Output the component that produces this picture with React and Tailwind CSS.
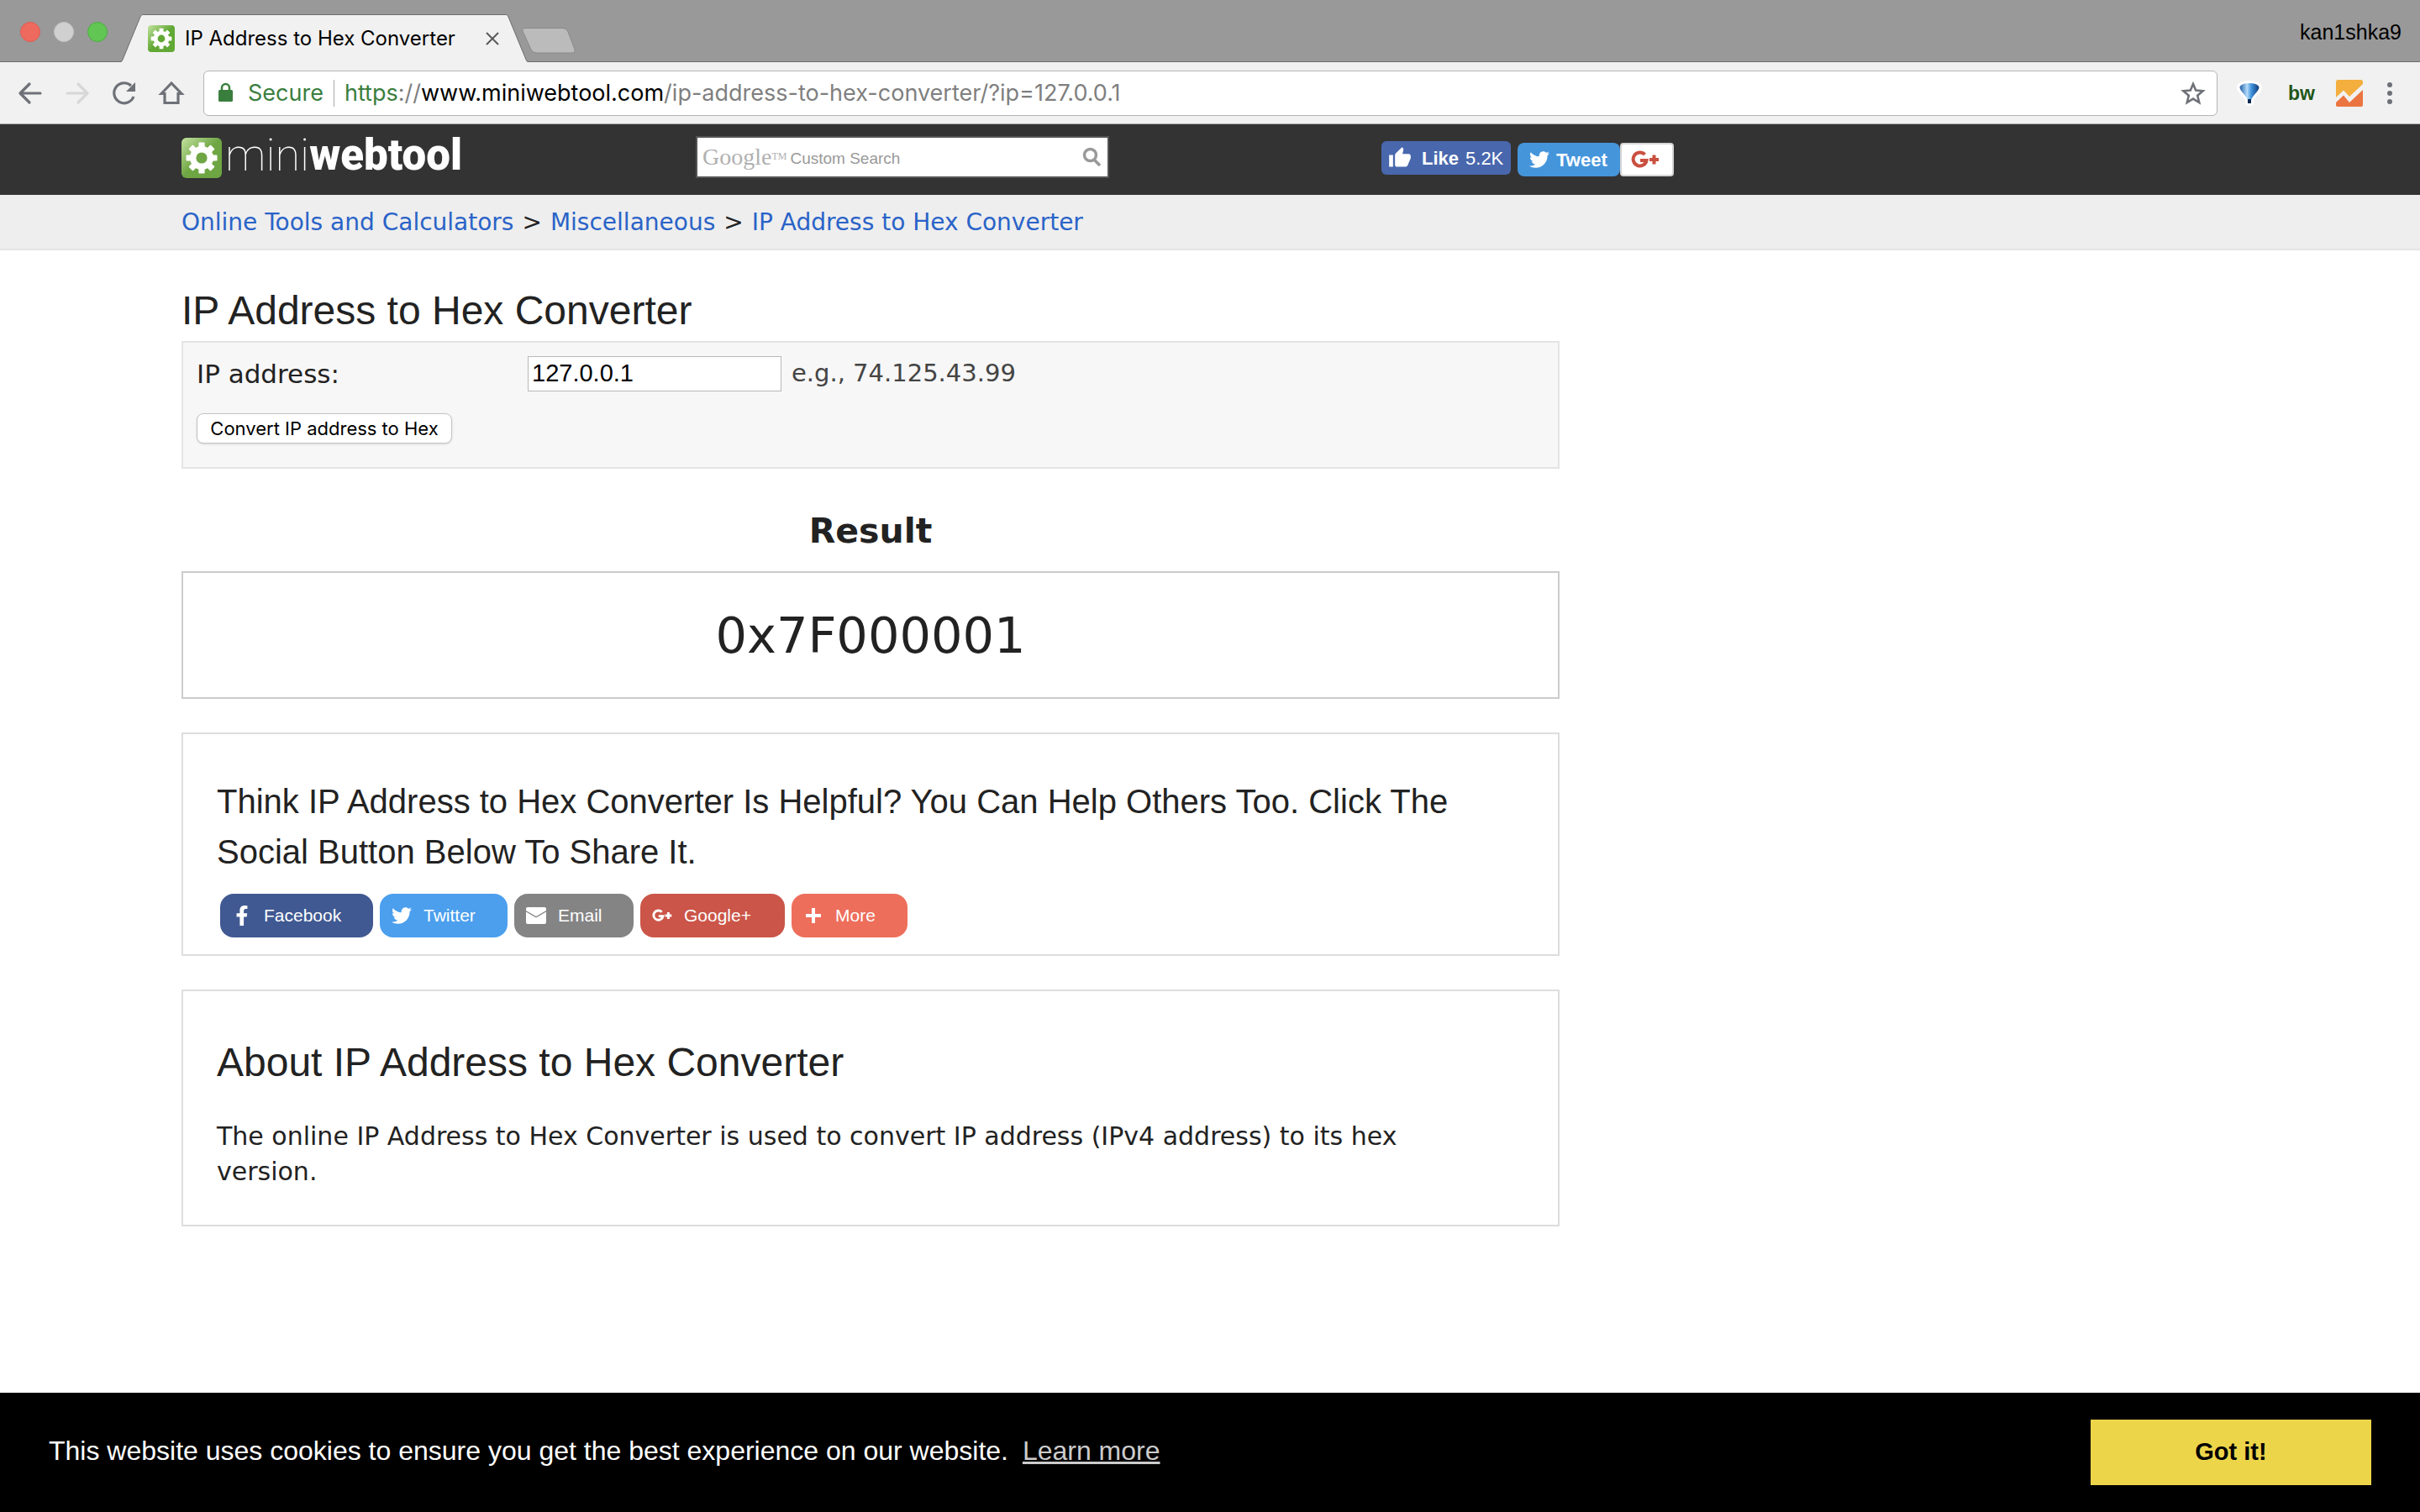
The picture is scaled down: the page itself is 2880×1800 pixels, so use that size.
import React, { useId } from "react";
import { FaFacebookF, FaTwitter } from "react-icons/fa";
import { MdThumbUp } from "react-icons/md";

function Gear({ className, hub }) {
  const id = useId();
  return (
    <svg viewBox="0 0 48 48" className={className} aria-hidden="true">
      <defs>
        <linearGradient id={id} x1="0" y1="0" x2="0.5" y2="0.5">
          <stop offset="0" stopColor="#c3e39f" />
          <stop offset="1" stopColor={hub} />
        </linearGradient>
      </defs>
      <rect width="48" height="48" rx="6" fill={`url(#${id})`} />
      <g transform="translate(24 24)" fill="#fff">
        <circle r="14" />
        {[0, 45, 90, 135, 180, 225, 270, 315].map((a) => (
          <rect key={a} x="-3.6" y="-18.5" width="7.2" height="9" rx="1" transform={`rotate(${a})`} />
        ))}
        <circle r="6.6" fill={hub} />
      </g>
    </svg>
  );
}

function TabShape({ children }) {
  return (
    <div className="flex h-full">
      <svg viewBox="0 0 26 57" className="h-[57px] w-[26px] shrink-0 self-end" aria-hidden="true">
        <path d="M0 57C1 56 1 56 2 54L23 3C24 1 25 .5 26 .5V57Z" fill="#f1f1f1" />
        <path d="M0 56C1 56 1 56 2 54L23 3C24 1 25 .5 26 .5" fill="none" stroke="#6c6c6c" />
      </svg>
      <div className="flex h-[57px] w-[432px] items-center self-end border-t border-[#6c6c6c] bg-[#f1f1f1]">{children}</div>
      <svg viewBox="0 0 26 57" className="h-[57px] w-[26px] shrink-0 self-end" aria-hidden="true">
        <path d="M26 57C25 56 25 56 24 54L3 3C2 1 1 .5 0 .5V57Z" fill="#f1f1f1" />
        <path d="M26 56C25 56 25 56 24 54L3 3C2 1 1 .5 0 .5" fill="none" stroke="#6c6c6c" />
      </svg>
    </div>
  );
}

function TabStrip() {
  return (
    <header className="flex h-[74px] justify-between bg-[#999999] shadow-[inset_0_-1px_0_#6c6c6c]">
      <div className="flex h-full">
        <div className="mr-4 flex h-[76px] items-center gap-4 pl-6">
          <span className="h-6 w-6 rounded-full border border-[#df5b50] bg-[#ee6a5f]" />
          <span className="h-6 w-6 rounded-full border border-[#c4c4c4] bg-[#d0d0d0]" />
          <span className="h-6 w-6 rounded-full border border-[#4cae3f] bg-[#61c654]" />
        </div>
        <TabShape>
          <Gear className="ml-[6px] h-8 w-8" hub="#62a835" />
          <span className="ml-3 flex-1 font-[Inter] text-2xl whitespace-nowrap text-black">IP Address to Hex Converter</span>
          <button aria-label="Close tab" className="mr-1 p-1">
            <svg viewBox="0 0 16 16" className="h-4 w-4" fill="none" stroke="#5a5a5a" strokeWidth="2"><path d="M1 1L15 15M15 1L1 15" /></svg>
          </button>
        </TabShape>
        <button aria-label="New tab" className="-ml-2 self-center pt-6">
          <svg viewBox="0 0 66 34" className="h-[34px] w-[66px]"><path d="M4 1.500H50Q54 1.500 56 6L64 27Q65 31 60 31H18Q14 31 12 27L2 5Q1 1.500 4 1.500Z" fill="#bbbbbb" stroke="#8a8a8a" /></svg>
        </button>
      </div>
      <span className="self-center pt-1 pr-[22px] text-[25px] text-black">kan1shka9</span>
    </header>
  );
}

function NavIcon({ label, color, children }) {
  return (
    <button aria-label={label} className="h-9 w-9 shrink-0">
      <svg viewBox="0 0 36 36" className="h-9 w-9" fill="none" stroke={color} strokeWidth="3.200" strokeLinecap="round" strokeLinejoin="round">{children}</svg>
    </button>
  );
}

function Toolbar() {
  return (
    <div className="flex h-[74px] items-center border-b border-[#a9a9a9] bg-[#f1f1f1] pr-8 pl-[18px]">
      <div className="flex items-center gap-5 pr-5">
        <NavIcon label="Back" color="#6e7178"><path d="M30 18H7M17 7L6 18L17 29" /></NavIcon>
        <NavIcon label="Forward" color="#d7d7d8"><path d="M6 18H29M19 7L30 18L19 29" /></NavIcon>
        <NavIcon label="Reload" color="#6e7178">
          <path d="M29 22A12 12 0 1 1 26 9" strokeLinecap="butt" />
          <path d="M31 5V16H20Z" fill="#6e7178" stroke="none" />
        </NavIcon>
        <NavIcon label="Home" color="#6e7178"><path d="M6 18.500L18 6L30 18.500H26V29.500H10V18.500Z" strokeLinejoin="miter" /></NavIcon>
      </div>
      <div className="flex h-[54px] flex-1 items-center rounded-md border border-[#b5b5b5] bg-white pr-3 pl-4 font-[Inter] text-[28px] leading-8">
        <svg viewBox="0 0 20 26" className="mr-4 h-[26px] w-5" aria-hidden="true">
          <rect x="1" y="9" width="17" height="14" rx="1.500" fill="#3a7e3e" />
          <path d="M5 10V6.500A4.500 4.500 0 0 1 14 6.500V10" fill="none" stroke="#3a7e3e" strokeWidth="2.500" />
        </svg>
        <span className="border-r border-[#a8a8a8] pr-3 text-[27px] text-[#3a7e3e]">Secure</span>
        <a href="https://www.miniwebtool.com/ip-address-to-hex-converter/?ip=127.0.0.1" className="flex-1 pl-3 text-[27px] text-[#7f7f7f]">
          <span className="text-[#3a7e3e]">https</span>://<span className="text-black">www.miniwebtool.com</span>/ip-address-to-hex-converter/?ip=127.0.0.1
        </a>
        <button aria-label="Bookmark">
          <svg viewBox="0 0 32 32" className="h-8 w-8" fill="none" stroke="#6e7178" strokeWidth="2.600"><path d="M16 5L19.200 12.600L27.600 13.300L21.200 18.800L23.200 27L16 22.600L8.800 27L10.800 18.800L4.400 13.300L12.800 12.600Z" /></svg>
        </button>
      </div>
      <div className="flex items-center pl-[22px]">
        <button aria-label="Balloon extension">
          <svg viewBox="0 0 32 32" className="h-8 w-8">
            <defs><linearGradient id="balloon"><stop offset="0" stopColor="#1d5fa8" /><stop offset=".38" stopColor="#b5dcfa" /><stop offset=".6" stopColor="#3f93dc" /><stop offset="1" stopColor="#103c7a" /></linearGradient></defs>
            <path d="M16 1C6 1 1 5 1 9C1 14 7 18 11 24V28Q12 31 16 31Q20 31 21 28V24C25 18 31 14 31 9C31 5 26 1 16 1Z" fill="#fff" />
            <path d="M16 4C8 4 4.500 7 4.500 9C5 14 11 17 14 24H18C21 17 27 14 27.500 9C27.500 7 24 4 16 4Z" fill="url(#balloon)" />
            <rect x="14" y="23" width="4" height="5" fill="#082a52" />
          </svg>
        </button>
        <button className="ml-[30px] w-8 text-[23px] leading-8 font-black text-[#225519]" aria-label="BuiltWith">bw</button>
        <button aria-label="Analytics extension" className="ml-[25px]">
          <svg viewBox="0 0 32 32" className="h-8 w-8">
            <rect width="32" height="32" rx="2.500" fill="#f4ae3d" />
            <path d="M0 25L9 17L16 26L32 10V29.500Q32 32 29.500 32H2.500Q0 32 0 29.500Z" fill="#eb7540" />
            <path d="M0 21L9 12.500L16 20L32 5V12L16 27L9 18.500L0 27Z" fill="#f1f1f1" />
          </svg>
        </button>
        <button aria-label="Menu" className="ml-7">
          <svg viewBox="0 0 8 28" className="h-7 w-2" fill="#6e7178"><circle cx="4" cy="4" r="3" /><circle cx="4" cy="14" r="3" /><circle cx="4" cy="24" r="3" /></svg>
        </button>
      </div>
    </div>
  );
}

function SiteHeader() {
  return (
    <div className="flex h-[84px] bg-[#333333] pl-[216px]">
      <a href="#home" className="mt-4 flex h-12 w-[612px] items-start text-white">
        <Gear className="h-12 w-12" hub="#6fa644" />
        <span className="ml-1 font-[Roboto] text-[54px] leading-[42px] font-thin">mini</span>
        <span className="font-[Roboto] text-[51px] leading-[42px] font-black">webtool</span>
      </a>
      <form className="mt-[14px] flex h-[50px] w-[492px] items-center border-2 border-[#555555] bg-white pr-[6px] pl-[6px]">
        <label htmlFor="search" className="font-[Liberation_Serif] text-[28px] leading-8 text-[#b0b0b0]">Google<sup className="text-xs">TM</sup></label>
        <input id="search" placeholder="Custom Search" className="ml-1 min-w-0 flex-1 pt-1 text-[19px] placeholder:text-[#999999]" />
        <button aria-label="Search">
          <svg viewBox="0 0 24 24" className="h-6 w-6" fill="none" stroke="#999999" strokeWidth="3.500"><circle cx="9.500" cy="9.500" r="7" /><path d="M14 15L21 22" /></svg>
        </button>
      </form>
      <div className="flex pl-[324px]">
        <button className="mt-5 flex h-10 w-[154px] items-center rounded-md bg-[#4967ad] pl-2 text-[22px] text-white">
          <MdThumbUp className="mr-3 h-7 w-7" /><b>Like</b><span className="ml-2">5.2K</span>
        </button>
        <button className="mt-[22px] ml-2 flex h-10 w-[122px] items-center rounded-lg bg-[#4595db] pl-[14px] text-[22px] font-bold text-white">
          <FaTwitter className="mr-2 h-6 w-6" />Tweet
        </button>
        <button aria-label="Google plus" className="mt-[22px] flex h-10 w-16 items-center rounded border-2 border-[#d5d5d5] bg-white pl-[11px] text-[#ca4f3f]">
          <GPlus className="h-[34px] w-[34px]" />
        </button>
      </div>
    </div>
  );
}

function GPlus({ className }) {
  return (
    <svg viewBox="0 0 34 34" className={className} fill="none" stroke="currentColor" strokeWidth="4" aria-hidden="true">
      <path d="M16.500 11A8 8 0 1 0 18.500 18H11" />
      <path d="M22 17H33M27.500 11.500V22.500" />
    </svg>
  );
}

function Mail({ className }) {
  return (
    <svg viewBox="0 0 24 20" className={className} aria-hidden="true">
      <path d="M2 0H22Q24 0 24 2V4L12 11L0 4V2Q0 0 2 0Z" fill="#fff" />
      <path d="M0 5.500L12 12.500L24 5.500V18Q24 20 22 20H2Q0 20 0 18Z" fill="#fff" />
    </svg>
  );
}

const shares = [
  { label: "Facebook", box: "bg-[#405992] w-[182px]", icon: <FaFacebookF className="h-6 w-6" /> },
  { label: "Twitter", box: "bg-[#4b9fed] w-[152px]", icon: <FaTwitter className="h-6 w-6" /> },
  { label: "Email", box: "bg-[#848484] w-[142px]", icon: <Mail className="h-5 w-6" /> },
  { label: "Google+", box: "bg-[#cb5548] w-[172px]", icon: <GPlus className="h-6 w-6" /> },
  { label: "More", box: "bg-[#ed6e5b] w-[138px]", icon: <svg viewBox="0 0 24 24" className="h-6 w-6" stroke="#fff" strokeWidth="4"><path d="M12 3V21M3 12H21" /></svg> },
];

export default function App() {
  return (
    <div className="flex min-h-screen flex-col bg-white font-[Liberation_Sans,sans-serif] text-[#222222]">
      <TabStrip />
      <Toolbar />
      <SiteHeader />
      <nav className="flex h-[66px] items-center gap-[10px] border-b-2 border-[#e4e4e4] bg-[#eeeeee] pt-[2px] pl-[216px] font-[DejaVu_Sans] text-[28px]">
        <a href="#tools" className="text-[#2a63c8]">Online Tools and Calculators</a>
        <span>&gt;</span>
        <a href="#misc" className="text-[#2a63c8]">Miscellaneous</a>
        <span>&gt;</span>
        <a href="#ip" className="text-[#2a63c8]">IP Address to Hex Converter</a>
      </nav>
      <main className="ml-[216px] w-full max-w-[1640px] flex-1 font-[DejaVu_Sans]">
        <h1 className="mt-10 font-[Liberation_Sans] text-[48px] leading-[64px]">IP Address to Hex Converter</h1>
        <form className="mt-1 h-[152px] border-2 border-[#e4e4e4] bg-[#f7f7f7] px-4 pt-[14px]">
          <div className="flex items-center">
            <label htmlFor="ip" className="w-[394px] text-[31px] leading-[46px]">IP address:</label>
            <input id="ip" defaultValue="127.0.0.1" className="h-[42px] w-[302px] border border-[#b8b8b8] bg-white px-1 font-[Liberation_Sans] text-[29px] text-black" />
            <span className="ml-3 text-[29px] text-[#444444]">e.g., 74.125.43.99</span>
          </div>
          <button type="button" className="mt-6 h-9 w-[304px] rounded-lg border border-[#c4c4c4] bg-white font-[Inter] text-[22px] text-black shadow-sm">Convert IP address to Hex</button>
        </form>
        <h2 className="mt-[42px] text-center text-[41px] leading-[64px] font-bold">Result</h2>
        <div className="mt-4 flex h-[152px] items-center justify-center border-2 border-[#cccccc] pt-[2px] text-[59px]">0x7F000001</div>
        <section className="mt-10 h-[266px] border-2 border-[#dddddd] px-10 pt-[50px] font-[Liberation_Sans]">
          <h3 className="text-[40px] leading-[60px]">Think IP Address to Hex Converter Is Helpful? You Can Help Others Too. Click The Social Button Below To Share It.</h3>
          <div className="mt-5 flex gap-2 pl-1">
            {shares.map((s) => (
              <button key={s.label} className={`flex h-[52px] items-center gap-[14px] rounded-2xl pl-[14px] text-[21px] text-white ${s.box}`}>{s.icon}{s.label}</button>
            ))}
          </div>
        </section>
        <section className="mt-10 h-[282px] border-2 border-[#dddddd] pt-[50px] pr-16 pl-10">
          <h2 className="font-[Liberation_Sans] text-[48px] leading-[70px]">About IP Address to Hex Converter</h2>
          <p className="mt-8 text-[30px] leading-[42px]">The online IP Address to Hex Converter is used to convert IP address (IPv4 address) to its hex version.</p>
        </section>
      </main>
      <footer className="flex h-[142px] items-center justify-between bg-black px-[58px] text-[32px] text-white">
        <p className="pb-1">This website uses cookies to ensure you get the best experience on our website. <a href="#cookies" className="ml-2 text-[#cccccc] underline">Learn more</a></p>
        <button className="h-[78px] w-[334px] bg-[#edd54a] text-[29px] font-bold text-black">Got it!</button>
      </footer>
    </div>
  );
}
